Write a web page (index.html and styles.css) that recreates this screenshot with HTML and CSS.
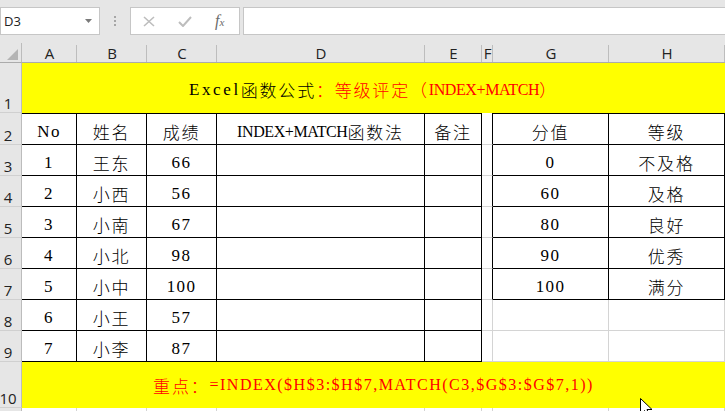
FILE: index.html
```html
<!DOCTYPE html>
<html lang="zh-CN">
<head>
<meta charset="utf-8">
<title>Excel INDEX+MATCH</title>
<link rel="stylesheet" href="styles.css">
</head>
<body>
<div class="topbar">
  <div class="namebox"><span class="ref">D3</span><svg class="dd" width="7" height="4" viewBox="0 0 7 4"><polygon points="0,0 7,0 3.5,4" fill="#7a7a7a"/></svg></div>
  <div class="grip"><i></i><i></i><i></i></div>
  <div class="fbtns">
    <svg class="ico" width="12" height="11" viewBox="0 0 12 11"><path d="M1 1 L11 10 M11 1 L1 10" stroke="#bdbdbd" stroke-width="1.6" fill="none"/></svg>
    <svg class="ico" width="14" height="11" viewBox="0 0 14 11"><path d="M1 6 L5 10 L13 1" stroke="#bdbdbd" stroke-width="2" fill="none"/></svg>
    <span class="fx"><i>f</i><i class="x">x</i></span>
  </div>
  <div class="finput"></div>
</div>

<div class="sheet">
  <div class="corner"><svg width="11" height="11" viewBox="0 0 11 11"><polygon points="0,11 11,0 11,11" fill="#b4b4b4"/></svg></div>
  <div class="ch">A</div><div class="ch">B</div><div class="ch">C</div><div class="ch">D</div><div class="ch">E</div><div class="ch">F</div><div class="ch">G</div><div class="ch">H</div>

  <div class="rh">1</div>
  <div class="m title"><span class="n w">Excel</span><span class="z">函数公式</span><span class="z r">：等级评定（</span><span class="n caps r">INDEX+MATCH</span><span class="z r">）</span></div>

  <div class="rh">2</div>
  <div class="c t tt"><span class="n">No</span></div>
  <div class="c t tt"><span class="z">姓名</span></div>
  <div class="c t tt"><span class="z">成绩</span></div>
  <div class="c t tt"><span class="n caps">INDEX+MATCH</span><span class="z">函数法</span></div>
  <div class="c t tt"><span class="z">备注</span></div>
  <div class="c fb"></div>
  <div class="c t tt"><span class="z">分值</span></div>
  <div class="c t tt"><span class="z">等级</span></div>

  <div class="rh">3</div>
  <div class="c t"><span class="n">1</span></div>
  <div class="c t"><span class="z">王东</span></div>
  <div class="c t"><span class="n">66</span></div>
  <div class="c t"></div>
  <div class="c t"></div>
  <div class="c fb"></div>
  <div class="c t"><span class="n">0</span></div>
  <div class="c t"><span class="z">不及格</span></div>

  <div class="rh">4</div>
  <div class="c t"><span class="n">2</span></div>
  <div class="c t"><span class="z">小西</span></div>
  <div class="c t"><span class="n">56</span></div>
  <div class="c t"></div>
  <div class="c t"></div>
  <div class="c fb"></div>
  <div class="c t"><span class="n">60</span></div>
  <div class="c t"><span class="z">及格</span></div>

  <div class="rh">5</div>
  <div class="c t"><span class="n">3</span></div>
  <div class="c t"><span class="z">小南</span></div>
  <div class="c t"><span class="n">67</span></div>
  <div class="c t"></div>
  <div class="c t"></div>
  <div class="c fb"></div>
  <div class="c t"><span class="n">80</span></div>
  <div class="c t"><span class="z">良好</span></div>

  <div class="rh">6</div>
  <div class="c t"><span class="n">4</span></div>
  <div class="c t"><span class="z">小北</span></div>
  <div class="c t"><span class="n">98</span></div>
  <div class="c t"></div>
  <div class="c t"></div>
  <div class="c fb"></div>
  <div class="c t"><span class="n">90</span></div>
  <div class="c t"><span class="z">优秀</span></div>

  <div class="rh">7</div>
  <div class="c t"><span class="n">5</span></div>
  <div class="c t"><span class="z">小中</span></div>
  <div class="c t"><span class="n">100</span></div>
  <div class="c t"></div>
  <div class="c t"></div>
  <div class="c fb"></div>
  <div class="c t"><span class="n">100</span></div>
  <div class="c t"><span class="z">满分</span></div>

  <div class="rh">8</div>
  <div class="c t"><span class="n">6</span></div>
  <div class="c t"><span class="z">小王</span></div>
  <div class="c t"><span class="n">57</span></div>
  <div class="c t"></div>
  <div class="c t"></div>
  <div class="c"></div>
  <div class="c"></div>
  <div class="c"></div>

  <div class="rh">9</div>
  <div class="c t"><span class="n">7</span></div>
  <div class="c t"><span class="z">小李</span></div>
  <div class="c t"><span class="n">87</span></div>
  <div class="c t"></div>
  <div class="c t"></div>
  <div class="c"></div>
  <div class="c"></div>
  <div class="c"></div>

  <div class="rh">10</div>
  <div class="m note"><span class="z r">重点：</span><span class="n f r">=INDEX($H$3:$H$7,MATCH(C3,$G$3:$G$7,1))</span></div>

  <div class="rh"></div>
  <div class="c"></div><div class="c"></div><div class="c"></div><div class="c"></div><div class="c"></div><div class="c"></div><div class="c"></div><div class="c"></div>
</div>

<svg class="cursor" width="14" height="20" viewBox="0 0 14 20"><path d="M0.5 0.5 V16.5 L4.5 12.5 L7 18.5 L9.5 17.5 L7 11.5 H12 Z" fill="#fff" stroke="#000" stroke-width="1"/></svg>
</body>
</html>
```

FILE: styles.css
```css
* { box-sizing: border-box; margin: 0; padding: 0; }
html, body { width: 725px; height: 411px; overflow: hidden; background: #fff; }
body { font-family: "Liberation Serif", "Noto Sans CJK SC", serif; color: #000; }

/* formula bar */
.topbar { display: flex; align-items: flex-start; height: 43px; padding-top: 7px; background: #e6e6e6; }
.namebox { width: 100px; height: 28px; background: #fff; border: 1px solid #c6c6c6; display: flex; align-items: center; justify-content: space-between; padding: 0 7px 0 3px; font: 13px "Open Sans", sans-serif; color: #222; }
.grip { width: 30px; height: 28px; display: flex; flex-direction: column; align-items: center; justify-content: center; gap: 2px; }
.grip i { display: block; width: 2px; height: 2px; background: #a6a6a6; }
.fbtns { width: 110px; height: 28px; background: #fff; border: 1px solid #c6c6c6; display: flex; align-items: center; padding-left: 12px; gap: 23px; }
.ico { display: block; }
.fx { font-family: "Liberation Serif", serif; color: #6b6b6b; font-size: 16px; line-height: 16px; white-space: nowrap; }
.fx i { font-style: italic; }
.fx .x { font-size: 11px; }
.finput { flex: 1; height: 28px; margin-left: 3px; background: #fff; border: 1px solid #c6c6c6; border-right: 0; }

/* sheet */
.sheet { display: grid; grid-template-columns: 22px 55px 70px 70px 208px 57px 11px 116px 116px; grid-template-rows: 20px 50px 32px repeat(7, 31px) 46px 31px; }
.corner { background: #e6e6e6; border-right: 1px solid #bcbcbc; border-bottom: 1px solid #ababab; display: flex; align-items: flex-end; justify-content: flex-end; padding: 0 3px 2px 0; }
.ch { background: linear-gradient(#bdbdbd, #bdbdbd) right bottom / 1px 17px no-repeat, #e6e6e6; border-bottom: 1px solid #ababab; display: flex; align-items: flex-end; justify-content: center; padding-bottom: 1px; font: 15px/16px "Open Sans", sans-serif; color: #222; }
.rh { background: #e6e6e6; border-right: 1px solid #bcbcbc; border-bottom: 1px solid #d0d0d0; display: flex; align-items: flex-end; justify-content: center; padding: 0 5px 1px 0; font: 15px/16px "Open Sans", sans-serif; color: #222; white-space: nowrap; }

.c { border-right: 1px solid #d4d4d4; border-bottom: 1px solid #d4d4d4; display: flex; align-items: center; justify-content: center; padding-top: 5px; white-space: nowrap; }
.t { border-right-color: #000; border-bottom-color: #000; }
.tt { border-top: 1px solid #000; }
.fb { border-right-color: #000; }

.m { grid-column: 2 / 10; background: #ffff00; display: flex; align-items: center; justify-content: center; white-space: nowrap; }
.title { padding-top: 3px; }

.n { font-family: "Liberation Serif", serif; font-size: 17px; letter-spacing: 1.4px; }
.n.w { letter-spacing: 2.6px; }
.n.caps { font-size: 16px; letter-spacing: -0.4px; }
.n.f { font-size: 16px; letter-spacing: 1.5px; }
.z { font-family: "Noto Sans CJK SC", sans-serif; font-size: 17px; font-weight: 300; letter-spacing: 1.8px; }
.r { color: #ff0000; }

.cursor { position: absolute; left: 640px; top: 398px; }
```
